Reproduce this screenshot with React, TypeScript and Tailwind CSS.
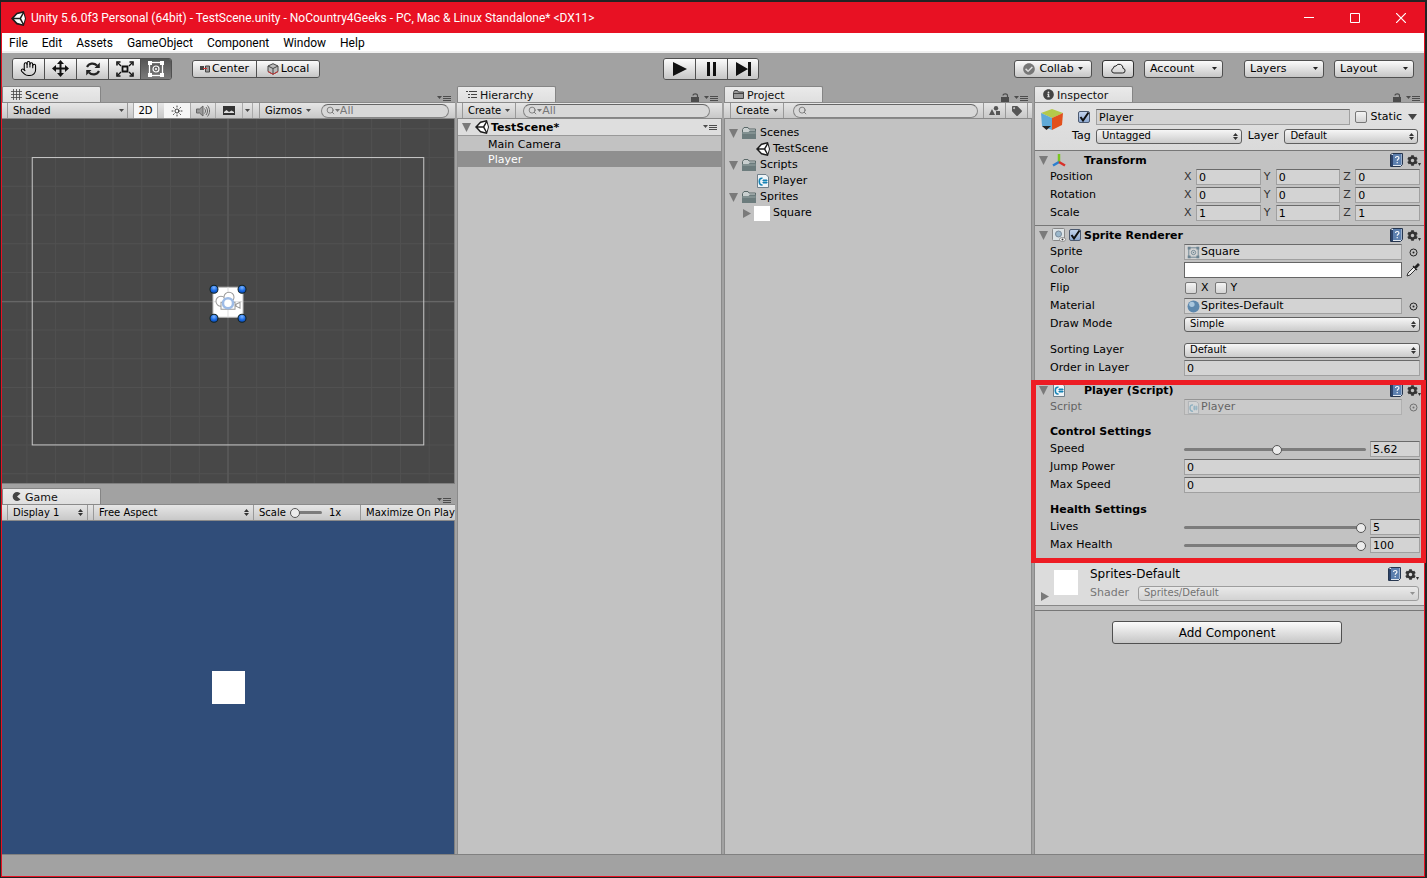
import { useState, type ReactNode } from 'react';
import { Hand, Search, Sun } from 'lucide-react';
import { FaCheckCircle, FaInfoCircle, FaTag, FaCog } from 'react-icons/fa';

/* ── small glyphs ─────────────────────────────────────── */
function UnityLogo({ size = 14, fill = '#ffffff' }: { size?: number; fill?: string }) {
  return (
    <svg width={size} height={size} viewBox="0 0 24 24" className="shrink-0">
      <path d="M0 12 9 2.6 20.6 0 24 12l-3.4 12L9 21.4z" fill="#1c1c1c" />
      <path d="M4.800 10.800 10 5.200 18.400 3l-4.400 7.800zM4.800 13.200 10 18.800l8.400 2.200-4.400-7.800zM16.200 12l4-7.500L22.300 12l-2.100 7.500z" fill={fill} />
    </svg>
  );
}

function Caret({ className = 'text-[#4a4a4a]' }: { className?: string }) {
  return (
    <svg width="5" height="3" viewBox="0 0 5 3" className={`shrink-0 ${className}`}>
      <path d="M0 0h5L2.500 3z" fill="currentColor" />
    </svg>
  );
}

function UpDown() {
  return (
    <svg width="5" height="7" viewBox="0 0 5 7" className="shrink-0 text-[#333]">
      <path d="M0 3h5L2.500 0zM0 4h5L2.500 7z" fill="currentColor" />
    </svg>
  );
}

function Fold({ open = true }: { open?: boolean }) {
  return (
    <svg width="9" height="9" viewBox="0 0 9 9" className="shrink-0 text-[#7a7a7a]">
      <path d={open ? 'M0 0h9L4.500 9z' : 'M1 0v9l8-4.500z'} fill="currentColor" />
    </svg>
  );
}

function PaneMenu() {
  return (
    <svg width="14" height="7" viewBox="0 0 14 7" className="shrink-0 text-[#4c4c4c]">
      <path d="M0 1h5L2.500 4z" fill="currentColor" />
      <path d="M6 1.500h8M6 3.500h8M6 5.500h8" stroke="currentColor" />
    </svg>
  );
}

function Padlock() {
  return (
    <svg width="8" height="9" viewBox="0 0 8 9" className="shrink-0 text-[#4c4c4c]">
      <path d="M0 4h8v5H0z" fill="currentColor" />
      <path d="M2 2.500C2 .2 6.500.2 6.500 2.500V4" fill="none" stroke="currentColor" strokeWidth="1.200" />
    </svg>
  );
}

function Folder() {
  return (
    <svg width="16" height="16" viewBox="0 0 16 16" className="shrink-0">
      <path d="M1.500 13V4.500l1.500-2h4L8 4h6.500v9z" fill="#c9cfcf" stroke="#5a6868" />
      <path d="M1 14V7h6.500L9 5.500h6V14z" fill="#6c7c7d" />
      <path d="M1.500 8h13" stroke="#98a6a6" />
    </svg>
  );
}

function CSharp({ size = 14, faded = false }: { size?: number; faded?: boolean }) {
  return (
    <svg width={size} height={size} viewBox="0 0 14 14" className={faded ? 'shrink-0 opacity-60' : 'shrink-0'}>
      <path d="M1.500.5h8.500l2.500 2.500v10.500h-11z" fill="#eef4f8" stroke="#6f7f8a" />
      <path d="M6.500 4.300C4.300 3.800 3.300 5.300 3.300 7.500s1 3.900 3.200 3.400" fill="none" stroke="#1583b5" strokeWidth="1.600" />
      <path d="M8 5v5M10 5v5M6.500 6.500h5M6.500 8.500h5" stroke="#1583b5" />
    </svg>
  );
}

function RectIcon({ size = 18, color = '#ffffff' }: { size?: number; color?: string }) {
  return (
    <svg width={size} height={size} viewBox="0 0 18 18" className="shrink-0">
      <rect x="2.500" y="2.500" width="13" height="13" fill="none" stroke={color} strokeWidth="1.300" />
      <path d="M1 1h4v4H1zM13 1h4v4h-4zM1 13h4v4H1zM13 13h4v4h-4z" fill={color} />
      <circle cx="9" cy="9" r="3" fill="none" stroke={color} strokeWidth="1.200" />
      <circle cx="9" cy="9" r="1" fill={color} />
    </svg>
  );
}

function HelpBook() {
  return (
    <svg width="13" height="14" viewBox="0 0 13 14" className="shrink-0">
      <path d="M.5 1.500 2.500.5h10v11l-2 2h-10z" fill="#dfe6ee" stroke="#26364f" />
      <path d="M1 2h2v11H1z" fill="#2c436b" />
      <path d="M3 1h8.500v11H3z" fill="#5c7fae" />
      <path d="M5.500 5c0-2 3.500-2 3.500 0 0 1.300-1.800 1.200-1.800 2.700M7.200 9v1.200" fill="none" stroke="#fff" strokeWidth="1.100" />
    </svg>
  );
}

function GearButton({ label }: { label: string }) {
  return (
    <button aria-label={label} className="ml-1 flex items-end text-[#333]">
      <FaCog className="h-[11px] w-[11px]" />
      <svg width="3" height="3" viewBox="0 0 3 3"><path d="M0 0h3L1.500 3z" fill="currentColor" /></svg>
    </button>
  );
}

/* ── shared pieces ────────────────────────────────────── */
const FIELD = 'min-w-0 rounded-none border border-[#a0a0a0] border-t-[#6a6a6a] bg-[#d3d3d3] text-[11px] text-black outline-none';

function TextField({ label, value, className = '' }: { label: string; value: string; className?: string }) {
  const [text, setText] = useState(value);
  return (
    <input
      aria-label={label}
      value={text}
      onChange={e => setText(e.target.value)}
      className={`h-4 px-[2px] leading-[14px] ${FIELD} ${className}`}
    />
  );
}

function Check({ label, on = false }: { label: string; on?: boolean }) {
  return (
    <span className="relative flex h-3 w-3 shrink-0">
      <input
        type="checkbox"
        aria-label={label}
        defaultChecked={on}
        className="peer h-3 w-3 appearance-none rounded-[2px] border border-[#777] bg-linear-to-b from-[#f4f4f4] to-[#d4d4d4] checked:border-[#4c5a70] checked:from-[#c3d3ec] checked:to-[#8faad2]"
      />
      <svg viewBox="0 0 12 12" className="pointer-events-none absolute inset-0 hidden h-3 w-3 peer-checked:block">
        <path d="M2.500 6 5 9.500 10.500 1.500" fill="none" stroke="#111" strokeWidth="2" />
      </svg>
    </span>
  );
}

function Popup({ label, options, disabled = false, className = '' }: {
  label: string; options: string[]; disabled?: boolean; className?: string;
}) {
  return (
    <span className={`relative flex min-w-0 items-center ${disabled ? 'opacity-50' : ''} ${className}`}>
      <select
        aria-label={label}
        disabled={disabled}
        className="h-[15px] w-full appearance-none rounded-[3px] border border-[#5f5f5f] bg-linear-to-b from-[#f6f6f6] to-[#cbcbcb] pl-[5px] text-[10px] leading-[12px] text-black"
      >
        {options.map(o => <option key={o}>{o}</option>)}
      </select>
      <span className="pointer-events-none absolute right-1">{disabled ? <Caret /> : <UpDown />}</span>
    </span>
  );
}

function SearchBox({ label, hint, className = '' }: { label: string; hint?: string; className?: string }) {
  return (
    <label className={`flex h-[14px] min-w-0 items-center rounded-full border border-[#858585] border-t-[#666] bg-[#d8d8d8] pl-1 ${className}`}>
      <Search className="h-[9px] w-[9px] shrink-0 text-[#666]" />
      {hint && <Caret className="text-[#777]" />}
      <input
        type="search"
        aria-label={label}
        placeholder={hint}
        className="w-full min-w-0 bg-transparent text-[11px] leading-[12px] outline-none placeholder:text-[#777]"
      />
    </label>
  );
}

function Tab({ icon, title, lock = false }: { icon: ReactNode; title: string; lock?: boolean }) {
  return (
    <div className="flex h-4 items-end justify-between">
      <button className="flex h-4 w-[99px] items-center gap-[3px] rounded-t-[2px] border border-b-0 border-[#858585] bg-linear-to-b from-[#eaeaea] to-[#dfdfdf] pl-[7px] text-[11px] leading-[14px] text-[#111]">
        <span className="flex w-3 shrink-0 justify-center text-[#444]">{icon}</span>
        <span className="pt-[2px]">{title}</span>
      </button>
      <span className="flex items-end gap-[5px] pr-1">
        {lock && <Padlock />}
        <PaneMenu />
      </span>
    </div>
  );
}

const STRIP = 'flex h-[17px] shrink-0 items-stretch overflow-hidden border-y border-t-[#8a8a8a] border-b-[#8a8a8a] bg-linear-to-b from-[#e6e6e6] to-[#c8c8c8] text-[10px] leading-[16px] whitespace-nowrap text-black';

/* ── title bar, menus, main toolbar ───────────────────── */
function TitleBar() {
  return (
    <header className="flex h-[30px] items-center bg-[#e81123] pl-[9px] font-[Roboto,sans-serif] text-[12px] text-white">
      <UnityLogo size={15} />
      <h1 className="ml-[5px] flex-1 truncate">
        Unity 5.6.0f3 Personal (64bit) - TestScene.unity - NoCountry4Geeks - PC, Mac &amp; Linux Standalone* &lt;DX11&gt;
      </h1>
      <button aria-label="Minimize" className="flex h-full w-[46px] items-center justify-center">
        <svg width="10" height="10" viewBox="0 0 10 10"><path d="M0 4.500h10" stroke="#fff" /></svg>
      </button>
      <button aria-label="Maximize" className="flex h-full w-[46px] items-center justify-center">
        <svg width="10" height="10" viewBox="0 0 10 10"><path d="M.5.5h9v9h-9z" fill="none" stroke="#fff" /></svg>
      </button>
      <button aria-label="Close" className="flex h-full w-[46px] items-center justify-center">
        <svg width="10" height="10" viewBox="0 0 10 10"><path d="m0 0 10 10M10 0 0 10" stroke="#fff" strokeWidth="1.200" /></svg>
      </button>
    </header>
  );
}

const MENUS = ['File', 'Edit', 'Assets', 'GameObject', 'Component', 'Window', 'Help'];

function MenuBar() {
  return (
    <nav className="flex h-5 items-center gap-[14px] border-b-2 border-[#f0f0f0] bg-white pt-px pl-[7px] font-[Roboto,sans-serif] text-[12px] text-black">
      {MENUS.map(m => <button key={m} className="leading-[18px]">{m}</button>)}
    </nav>
  );
}

const BTN = 'flex items-center justify-center bg-linear-to-b from-[#fbfbfb] to-[#c6c6c6]';

function DropButton({ children, className }: { children: ReactNode; className: string }) {
  return (
    <button className={`h-[18px] rounded-[3px] border border-[#505050] px-[5px] text-[11px] leading-[16px] ${BTN} ${className}`}>
      {children}
    </button>
  );
}

function Toolbar() {
  return (
    <div className="grid h-[33px] grid-cols-[1fr_auto_1fr] items-center px-[10px] pb-[2px] text-black">
      <div className="flex items-center gap-5">
        <div className="flex h-[22px] divide-x divide-[#505050] overflow-hidden rounded-[3px] border border-[#505050]">
          <button aria-label="Hand" className={`w-8 ${BTN}`}><Hand className="h-[17px] w-[17px]" strokeWidth={1.5} /></button>
          <button aria-label="Move" className={`w-8 ${BTN}`}>
            <svg width="17" height="17" viewBox="0 0 17 17" fill="#111">
              <path d="M8.500 0 12 4H9.500v3.500H13V5l4 3.500-4 3.500V9.500H9.500V13H12l-3.500 4L5 13h2.500V9.500H4V12L0 8.500 4 5v2.500h3.500V4H5z" />
            </svg>
          </button>
          <button aria-label="Rotate" className={`w-8 ${BTN}`}>
            <svg width="16" height="16" viewBox="0 0 16 16" fill="none" stroke="#222" strokeWidth="2.200">
              <path d="M2 6C4 2 9 1.500 12 4.500M14 10C12 14 7 14.500 4 11.500" />
              <path d="M14.800 1.500V7H9.500zM1.200 14.500V9h5.300z" fill="#222" stroke="none" />
            </svg>
          </button>
          <button aria-label="Scale" className={`w-8 ${BTN}`}>
            <svg width="18" height="16" viewBox="0 0 18 16" fill="none" stroke="#111" strokeWidth="1.300">
              <path d="M6.500 5.500h5v5h-5z" strokeWidth="1.800" />
              <path d="m2 2 3 3M16 2l-3 3M2 14l3-3M16 14l-3-3" />
              <path d="M1 4.500V1h3.500M17 4.500V1h-3.500M1 11.500V15h3.500M17 11.500V15h-3.500" strokeWidth="1.600" />
            </svg>
          </button>
          <button aria-label="Rect" className="flex w-[30px] items-center justify-center bg-linear-to-b from-[#555] to-[#7b7b7b]">
            <RectIcon />
          </button>
        </div>
        <div className="flex h-[18px] divide-x divide-[#505050] overflow-hidden rounded-[3px] border border-[#505050] text-[11px] leading-[16px]">
          <button className={`w-16 gap-[2px] ${BTN}`}>
            <svg width="10" height="8" viewBox="0 0 10 8">
              <path d="M0 1h4v4H0z" fill="#444" /><path d="M5.500 1h4v6h-4z" fill="#999" stroke="#444" />
              <path d="M3 3.500h4" stroke="#c33" />
            </svg>
            Center
          </button>
          <button className={`w-[62px] gap-[2px] ${BTN}`}>
            <svg width="12" height="12" viewBox="0 0 12 12" fill="none">
              <path d="M6 .7 11 3v5.500L6 11.300 1 8.500V3z" fill="#bbb" stroke="#444" />
              <path d="m1 3 5 2.500L11 3M6 5.500V11" stroke="#444" />
              <path d="m1 8.500 5 2.800 5-2.800" stroke="#c33" />
            </svg>
            Local
          </button>
        </div>
      </div>

      <div className="mr-1 flex h-[22px] divide-x divide-[#505050] overflow-hidden rounded-[3px] border border-[#505050]">
        <button aria-label="Play" className={`w-8 ${BTN}`}>
          <svg width="14" height="14" viewBox="0 0 14 14"><path d="M0 0v14l14-7z" fill="#111" /></svg>
        </button>
        <button aria-label="Pause" className={`w-8 ${BTN}`}>
          <svg width="10" height="14" viewBox="0 0 10 14"><path d="M0 0h3v14H0zM6 0h3v14H6z" fill="#111" /></svg>
        </button>
        <button aria-label="Step" className={`w-[30px] ${BTN}`}>
          <svg width="15" height="14" viewBox="0 0 15 14"><path d="M0 0v14l12-7zM12 0h3v14h-3z" fill="#111" /></svg>
        </button>
      </div>

      <div className="flex items-center justify-end gap-[10px]">
        <DropButton className="w-[78px] gap-1">
          <FaCheckCircle className="h-3 w-3 shrink-0 text-[#777]" />Collab<Caret className="text-[#222]" />
        </DropButton>
        <button aria-label="Cloud" className={`h-[18px] w-8 rounded-[3px] border border-[#333] ${BTN}`}>
          <svg width="16" height="11" viewBox="0 0 16 11">
            <path d="M4 10h8.500a2.300 2.300 0 0 0 .5-4.600A3.800 3.800 0 0 0 6 3a2.300 2.300 0 0 0-2.600 2.300A2.400 2.400 0 0 0 4 10z" fill="none" stroke="#222" />
          </svg>
        </button>
        <DropButton className="mr-[11px] w-[79px] justify-between!"><span>Account</span><Caret className="text-[#222]" /></DropButton>
        <DropButton className="w-20 justify-between!"><span>Layers</span><Caret className="text-[#222]" /></DropButton>
        <DropButton className="w-20 justify-between!"><span>Layout</span><Caret className="text-[#222]" /></DropButton>
      </div>
    </div>
  );
}

/* ── scene + game ─────────────────────────────────────── */
const GRID_STEP = 28.7;
const GRID = Array.from({ length: 61 }, (_, i) => (i - 30) * GRID_STEP);
const HANDLES = [[-14, -12], [14, -12], [-14, 17], [14, 17]];

function SceneView() {
  return (
    <div className="flex min-h-0 flex-[365] border-r border-b border-[#808080] bg-[#484848]">
      <svg viewBox="-226 -182 452 364" preserveAspectRatio="xMidYMid slice" className="h-full w-full">
        <defs>
          <radialGradient id="knob" cx="0.5" cy="0.3" r="0.7">
            <stop offset="0" stopColor="#7db4ff" />
            <stop offset="0.6" stopColor="#1767e0" />
            <stop offset="1" stopColor="#0d4cb8" />
          </radialGradient>
        </defs>
        {GRID.map(p => <path key={p} d={`M${p}-600V600M-900 ${p}H900`} stroke="#515151" />)}
        <path d="M0-600V600" stroke="#5a5a5a" strokeWidth="1.500" />
        <path d="M-900 .5H900" stroke="#6e6e6e" />
        <rect x="-195.500" y="-143.500" width="391" height="287" fill="none" stroke="#c9c9c9" />
        <rect x="-15" y="-14" width="30" height="30" fill="#fff" stroke="#bbb" />
        <path d="M0-14V16M-15 .5H15" stroke="#ddd" />
        <g fill="#fff" stroke="#999">
          <circle cx="-7" cy="0" r="5" />
          <circle cx="1" cy="-4" r="5" />
          <path d="M-7 1H7v7H-7zM8 3l4-2v6l-4-2z" />
        </g>
        <circle cx="0" cy="2" r="5" fill="#fff" stroke="#9dbbe6" strokeWidth="2.500" />
        {HANDLES.map(([x, y]) => (
          <circle key={`${x},${y}`} cx={x} cy={y} r="4" fill="url(#knob)" stroke="#122" />
        ))}
      </svg>
    </div>
  );
}

const RANGE = 'h-3 min-w-0 appearance-none bg-transparent [&::-webkit-slider-runnable-track]:h-[3px] [&::-webkit-slider-runnable-track]:rounded-full [&::-webkit-slider-runnable-track]:bg-[#7c7c7c] [&::-webkit-slider-thumb]:-mt-[3px] [&::-webkit-slider-thumb]:h-[10px] [&::-webkit-slider-thumb]:w-[10px] [&::-webkit-slider-thumb]:appearance-none [&::-webkit-slider-thumb]:rounded-full [&::-webkit-slider-thumb]:border [&::-webkit-slider-thumb]:border-[#555] [&::-webkit-slider-thumb]:bg-[#ececec]';

function LeftColumn() {
  return (
    <div className="flex min-w-0 flex-col">
      <Tab
        title="Scene"
        icon={<svg width="11" height="11" viewBox="0 0 11 11"><path d="M2.500 0v11M5.500 0v11M8.500 0v11M0 2.500h11M0 5.500h11M0 8.500h11" stroke="currentColor" strokeWidth="0.8" /></svg>}
      />
      <div className={`${STRIP} pl-[5px]`}>
        <button className="flex w-[121px] items-center justify-between border-x border-[#999] pr-[3px] pl-[5px]">Shaded<Caret /></button>
        <button className="ml-[5px] w-[25px] border-x border-[#aaa] bg-[#f6f6f6]">2D</button>
        <button aria-label="Lighting" className="ml-[6px] flex w-[26px] items-center justify-center bg-[#f6f6f6]"><Sun className="h-3 w-3" strokeWidth={1.5} /></button>
        <button aria-label="Audio" className="flex w-[26px] items-center justify-center border-x border-[#aaa]">
          <svg width="14" height="12" viewBox="0 0 14 12" fill="none" stroke="#666">
            <path d="M.5 4h3l3.500-3v10L3.500 8h-3z" fill="#999" />
            <path d="M8.500 3.500c1.300 1.500 1.300 3.500 0 5M10 2c2 2.400 2 5.600 0 8M11.500.5c2.700 3.300 2.700 7.700 0 11" />
          </svg>
        </button>
        <button aria-label="Effects" className="flex w-[26px] items-center justify-center">
          <svg width="12" height="9" viewBox="0 0 12 9"><path d="M0 0h12v9H0z" fill="#333" /><path d="M1 7V6l2.500-2L6 6l2.500-1.500L11 6v1z" fill="#ddd" /></svg>
        </button>
        <button aria-label="Effects menu" className="flex w-[11px] items-center justify-center border-x border-[#aaa]"><Caret /></button>
        <button className="ml-[6px] flex items-center gap-1 border-l border-[#999] pl-[5px]">Gizmos<Caret /></button>
        <SearchBox label="Search scene" hint="All" className="mr-[6px] ml-[10px] flex-1 self-center" />
      </div>
      <SceneView />
      <div className="mt-1">
        <Tab
          title="Game"
          icon={<svg width="9" height="9" viewBox="0 0 9 9"><path d="M8.500 1.500A4.500 4.500 0 1 0 8.500 7.500L5 4.500z" fill="currentColor" /></svg>}
        />
      </div>
      <div className={`${STRIP} pl-[5px]`}>
        <button className="flex w-[81px] items-center justify-between border-x border-[#999] pr-1 pl-[5px]">Display 1<UpDown /></button>
        <button className="ml-[5px] flex w-[161px] items-center justify-between border-x border-[#999] pr-1 pl-[5px]">Free Aspect<UpDown /></button>
        <label className="flex w-[107px] items-center border-r border-[#999] pl-[5px]">
          Scale
          <input type="range" min="1" max="5" defaultValue="1" className={`mx-1 w-8 ${RANGE}`} />
          <span className="ml-[3px]">1x</span>
        </label>
        <button className="min-w-0 flex-1 overflow-hidden pl-[5px] text-left">Maximize On Play</button>
      </div>
      <div className="flex flex-[333] items-center justify-center border-r border-[#808080] bg-[#304d79]">
        <div className="h-[33px] w-[33px] bg-white" />
      </div>
    </div>
  );
}

/* ── hierarchy + project ──────────────────────────────── */
function Hierarchy() {
  return (
    <div className="flex min-w-0 flex-col text-[11px] text-black">
      <Tab
        title="Hierarchy" lock
        icon={<svg width="11" height="9" viewBox="0 0 11 9"><path d="M0 1.500h2M3 1.500h8M2 4.500h2M5 4.500h6M2 7.500h2M5 7.500h6" stroke="currentColor" /></svg>}
      />
      <div className={`${STRIP} pl-[5px]`}>
        <button className="flex items-center gap-1 border-x border-[#999] px-[5px]">Create<Caret /></button>
        <SearchBox label="Search hierarchy" hint="All" className="mr-3 ml-[7px] flex-1 self-center" />
      </div>
      <div className="flex-1 border-x border-[#8a8a8a] bg-[#c2c2c2]">
        <div className="flex h-[17px] items-center border-b border-[#999] bg-[#dedede] pr-1 pl-1">
          <Fold />
          <span className="ml-1 flex"><UnityLogo /></span>
          <span className="ml-[2px] flex-1 pt-px leading-4 font-bold">TestScene*</span>
          <PaneMenu />
        </div>
        <ul className="leading-[17px]">
          <li className="h-[15px] pl-[30px]">Main Camera</li>
          <li className="h-4 bg-[#8f8f8f] pl-[30px] text-white">Player</li>
        </ul>
      </div>
    </div>
  );
}

function TreeFolder({ name, children }: { name: string; children: ReactNode }) {
  return (
    <li>
      <div className="flex h-4 items-center gap-[3px] pl-1"><Fold /><Folder />{name}</div>
      <ul>{children}</ul>
    </li>
  );
}

function Project() {
  return (
    <div className="flex min-w-0 flex-col text-[11px] text-black">
      <Tab
        title="Project" lock
        icon={<svg width="11" height="9" viewBox="0 0 11 9"><path d="M.5 8.500v-6l1-2h3l1 1.500h5v6.500z" fill="#999" stroke="currentColor" /><path d="M.5 3.500h10" stroke="currentColor" /></svg>}
      />
      <div className={`${STRIP} pl-[6px]`}>
        <button className="flex items-center gap-1 border-x border-[#999] px-[5px]">Create<Caret /></button>
        <SearchBox label="Search project" className="mr-[5px] ml-[9px] flex-1 self-center" />
        <button aria-label="Search by type" className="flex w-[22px] items-center justify-center border-l border-[#999]">
          <svg width="11" height="10" viewBox="0 0 11 10" fill="#555"><path d="M0 9h6L3 3zM7 5h4v4H7z" /><circle cx="7" cy="2.200" r="2.200" /></svg>
        </button>
        <button aria-label="Search by label" className="mr-1 flex w-[23px] items-center justify-center border-x border-[#999]">
          <FaTag className="h-[10px] w-[10px] text-[#555]" />
        </button>
      </div>
      <ul className="flex-1 border-x border-[#8a8a8a] bg-[#c2c2c2] pt-[6px] leading-4">
        <TreeFolder name="Scenes">
          <li className="flex h-4 items-center gap-[3px] pl-[31px]"><UnityLogo />TestScene</li>
        </TreeFolder>
        <TreeFolder name="Scripts">
          <li className="flex h-4 items-center gap-[3px] pl-[31px]"><CSharp />Player</li>
        </TreeFolder>
        <TreeFolder name="Sprites">
          <li className="flex h-4 items-center gap-[3px] pl-[17px]">
            <Fold open={false} /><span className="h-[15px] w-4 bg-white" />Square
          </li>
        </TreeFolder>
      </ul>
    </div>
  );
}

/* ── inspector ────────────────────────────────────────── */
function Section({ title, icon, toggle = false, className = '', children }: {
  title: string; icon: ReactNode; toggle?: boolean; className?: string; children: ReactNode;
}) {
  return (
    <section className={`relative border-t border-[#777] pt-px ${className}`}>
      <div className="flex h-4 items-center pr-[3px] pl-1">
        <Fold />
        <span className="ml-[3px] flex w-[15px] justify-center">{icon}</span>
        <span className="ml-[3px] flex w-[15px]">{toggle && <Check label={`${title} enabled`} on />}</span>
        <h2 className="flex-1 pt-[2px] font-bold">{title}</h2>
        <HelpBook />
        <GearButton label={`${title} options`} />
      </div>
      {children}
    </section>
  );
}

function Row({ label, children, dim = false }: { label: string; children: ReactNode; dim?: boolean }) {
  return (
    <div className={`flex h-[18px] items-center pr-1 pl-[15px] ${dim ? 'opacity-50' : ''}`}>
      <span className="w-[134px] shrink-0">{label}</span>
      {children}
    </div>
  );
}

function Vector({ label, v }: { label: string; v: string }) {
  return (
    <Row label={label}>
      <div className="grid flex-1 grid-cols-3 gap-[3px]">
        {['X', 'Y', 'Z'].map(a => (
          <span key={a} className="flex items-center">
            <span className="w-3 shrink-0 text-[#333]">{a}</span>
            <TextField label={`${label} ${a}`} value={v} className="w-full" />
          </span>
        ))}
      </div>
    </Row>
  );
}

function ObjectField({ label, icon, value, dim }: { label: string; icon: ReactNode; value: string; dim?: boolean }) {
  return (
    <Row label={label} dim={dim}>
      <button className={`flex h-4 flex-1 items-center gap-px pl-[2px] leading-[14px] ${FIELD}`}>{icon}{value}</button>
      <button aria-label={`Pick ${label}`} disabled={dim} className="flex w-[18px] justify-end pr-[2px]">
        <svg width="9" height="9" viewBox="0 0 9 9"><circle cx="4.500" cy="4.500" r="3.500" fill="none" stroke="#222" /><circle cx="4.500" cy="4.500" r="1" fill="#222" /></svg>
      </button>
    </Row>
  );
}

function SliderRow({ label, value, max }: { label: string; value: number; max: number }) {
  const [val, setVal] = useState(value);
  return (
    <Row label={label}>
      <input type="range" aria-label={label} min="0" max={max} step="0.01" value={val}
             onChange={e => setVal(+e.target.value)} className={`flex-1 ${RANGE}`} />
      <input aria-label={`${label} value`} value={val} onChange={e => setVal(+e.target.value || 0)}
             className={`ml-1 h-4 w-[50px] px-[2px] leading-[14px] ${FIELD}`} />
    </Row>
  );
}

function Inspector() {
  return (
    <div className="flex min-w-0 flex-col text-[11px] leading-4 text-black">
      <Tab title="Inspector" lock icon={<FaInfoCircle className="h-[11px] w-[11px]" />} />
      <div className="flex-1 border-t border-l border-[#8a8a8a] bg-[#c2c2c2]">
        <div className="flex h-[47px] bg-linear-to-b from-[#e2e2e2] to-[#dadada] pt-[6px]">
          <svg width="24" height="24" viewBox="0 0 24 24" className="ml-[5px]">
            <path d="M12 0 23 4 12 9 1 4z" fill="#b4c94a" />
            <path d="M1 4l11 5v12L2 17z" fill="#5fa9d6" />
            <path d="M23 4 12 9v12l10-5z" fill="#e2501c" />
            <path d="M2 17h9l-4.500 4z" fill="#222" />
          </svg>
          <div className="flex min-w-0 flex-1 flex-col gap-[3px] pl-2">
            <div className="flex h-4 items-center pr-[7px] pl-[6px]">
              <Check label="Active" on />
              <TextField label="Name" value="Player" className="ml-[6px] flex-1" />
              <label className="ml-[5px] flex items-center gap-1"><Check label="Static" />Static</label>
              <svg width="9" height="6" viewBox="0 0 9 6" className="ml-[6px]"><path d="M0 0h9L4.500 6z" fill="#444" /></svg>
            </div>
            <div className="flex h-4 items-center pr-[6px]">
              <span className="mr-1 w-5 shrink-0">Tag</span>
              <Popup label="Tag" options={['Untagged']} className="flex-[144]" />
              <span className="mx-[6px]">Layer</span>
              <Popup label="Layer" options={['Default']} className="flex-[132]" />
            </div>
          </div>
        </div>

        <Section
          title="Transform" className="pb-[3px]"
          icon={<svg width="14" height="13" viewBox="0 0 14 13" fill="none" strokeWidth="2.500"><path d="M7 8V0" stroke="#7ac51f" /><path d="M7 8 1 11.500" stroke="#2b7fd0" /><path d="m7 8 6 3.500" stroke="#d8302a" /></svg>}
        >
          <Vector label="Position" v="0" />
          <Vector label="Rotation" v="0" />
          <Vector label="Scale" v="1" />
        </Section>

        <Section
          title="Sprite Renderer" toggle className="pb-[3px]"
          icon={<svg width="14" height="14" viewBox="0 0 14 14"><rect x="0.500" y="0.500" width="12" height="12" rx="1" fill="#dde3e6" stroke="#888" /><circle cx="6.500" cy="6" r="3" fill="#9bb8cc" stroke="#789" /><ellipse cx="10.500" cy="11.500" rx="3" ry="2" fill="#fff" stroke="#777" strokeWidth="0.800" /><circle cx="10.500" cy="11.500" r="1" fill="#333" /></svg>}
        >
          <ObjectField label="Sprite" icon={<RectIcon size={13} color="#6d8492" />} value="Square" />
          <Row label="Color">
            <input type="text" aria-label="Color" readOnly className="h-4 min-w-0 flex-1 border border-[#666] bg-white" />
            <button aria-label="Pick color" className="flex w-[18px] justify-end">
              <svg width="14" height="14" viewBox="0 0 14 14"><path d="m1 13 1-3 6-6 2 2-6 6z" fill="#eee" stroke="#333" /><path d="m7 3 4 4M9 4l3-3 1 1-3 3z" fill="#222" stroke="#222" strokeWidth="1.300" /></svg>
            </button>
          </Row>
          <Row label="Flip">
            <label className="flex items-center gap-1 pl-px"><Check label="Flip X" />X</label>
            <label className="ml-[6px] flex items-center gap-1"><Check label="Flip Y" />Y</label>
          </Row>
          <ObjectField
            label="Material" value="Sprites-Default"
            icon={<svg width="13" height="13" viewBox="0 0 12 12"><circle cx="6" cy="6" r="5.500" fill="#5d88ad" /><circle cx="4.500" cy="4" r="2.500" fill="#a9c7de" /></svg>}
          />
          <Row label="Draw Mode"><Popup label="Draw Mode" options={['Simple', 'Sliced', 'Tiled']} className="flex-1" /></Row>
          <div className="h-2" />
          <Row label="Sorting Layer"><Popup label="Sorting Layer" options={['Default']} className="flex-1" /></Row>
          <Row label="Order in Layer"><TextField label="Order in Layer" value="0" className="flex-1" /></Row>
        </Section>

        <Section title="Player (Script)" icon={<CSharp />} className="pb-2">
          <ObjectField label="Script" icon={<CSharp size={13} faded />} value="Player" dim />
          <h3 className="mt-2 pl-[15px] font-bold">Control Settings</h3>
          <SliderRow label="Speed" value={5.62} max={11} />
          <Row label="Jump Power"><TextField label="Jump Power" value="0" className="flex-1" /></Row>
          <Row label="Max Speed"><TextField label="Max Speed" value="0" className="flex-1" /></Row>
          <h3 className="mt-2 pl-[15px] font-bold">Health Settings</h3>
          <SliderRow label="Lives" value={5} max={5} />
          <SliderRow label="Max Health" value={100} max={100} />
          {/* callout frame drawn over the component */}
          <div className="pointer-events-none absolute -inset-y-px -right-[2px] -left-1 z-10 border-5 border-[#ed1c24]" />
        </Section>

        <section className="flex h-11 border-b border-[#888] bg-[#dcdcdc] pt-1">
          <span className="flex w-[19px] items-end justify-center pb-1"><Fold open={false} /></span>
          <div className="mt-1 h-[25px] w-6 bg-white" />
          <div className="flex min-w-0 flex-1 flex-col gap-[3px] pr-[5px] pl-3">
            <div className="flex h-4 items-center">
              <h2 className="flex-1 text-[12px]">Sprites-Default</h2>
              <HelpBook />
              <GearButton label="Material options" />
            </div>
            <div className="flex h-4 items-center">
              <span className="w-12 shrink-0 text-[#777]">Shader</span>
              <Popup label="Shader" options={['Sprites/Default']} disabled className="flex-1" />
            </div>
          </div>
        </section>
        <div className="mt-1 flex justify-center border-t border-[#777] pt-[10px] pr-[5px]">
          <button className={`h-[23px] w-[230px] rounded-[3px] border border-[#505050] text-[12px] ${BTN}`}>Add Component</button>
        </div>
      </div>
    </div>
  );
}

export default function App() {
  return (
    <div className="flex min-h-screen flex-col bg-[#232323] pt-[2px] pr-[2px] pb-px pl-px font-['DejaVu_Sans',sans-serif]">
      <div className="flex flex-1 flex-col border border-[#e81123] bg-[#a2a2a2]">
        <TitleBar />
        <MenuBar />
        <Toolbar />
        <main className="grid flex-1 grid-cols-[453fr_265fr_308fr_390fr] gap-[2px]">
          <LeftColumn />
          <Hierarchy />
          <Project />
          <Inspector />
        </main>
        <footer className="h-[22px] border-t border-[#808080]" />
      </div>
    </div>
  );
}
